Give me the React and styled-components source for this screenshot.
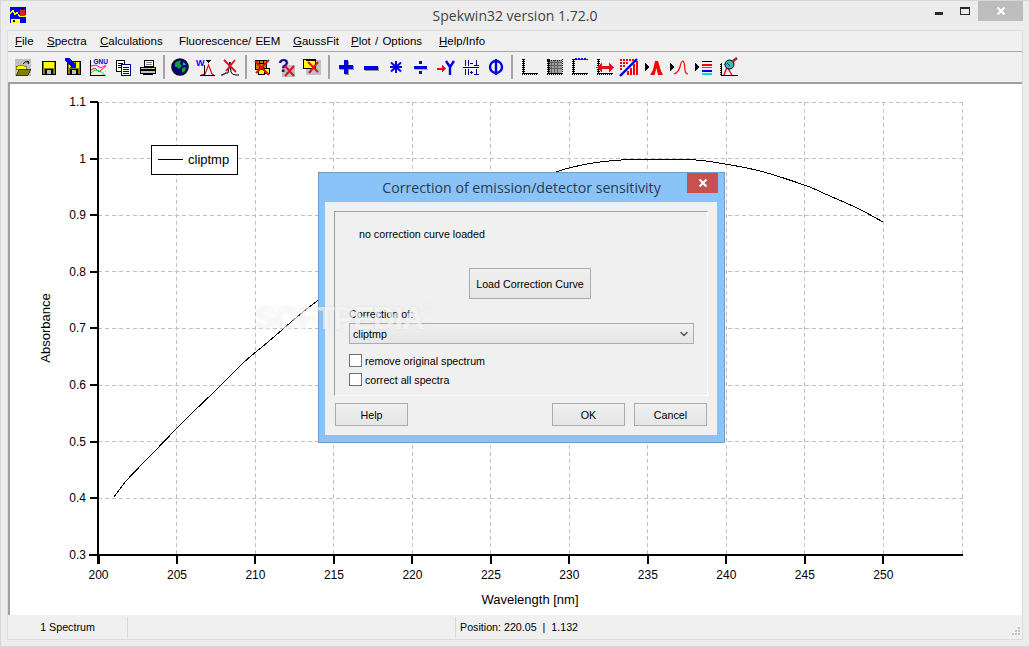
import React from 'react';
import styled, { createGlobalStyle } from 'styled-components';
import { ChevronDown } from 'lucide-react';

const Global = createGlobalStyle`
  html, body { margin: 0; padding: 0; overflow: hidden; background: #ececec; }
  * { box-sizing: border-box; }
`;

const Win = styled.div`
  position: relative; width: 1030px; height: 647px; background: #ececec;
  border: 1px solid #d6d6d6; display: flex; flex-direction: column;
  font-family: "Liberation Sans", Arial, sans-serif; font-size: 12px; color: #000;
`;
const TitleBar = styled.div`
  position: relative; height: 29px; flex: none; display: flex; align-items: center; justify-content: center;
`;
const AppIcon = styled.svg`position: absolute; left: 9px; top: 6px;`;
const TitleText = styled.div`
  font-family: "Open Sans", sans-serif; font-size: 14px; color: #444; margin-top: -1px;
`;
const WinButtons = styled.div`
  position: absolute; right: 6px; top: 0; height: 20px; display: flex; align-items: stretch;
`;
const WinBtn = styled.div`
  width: ${p => p.$w}px; height: 20px; display: flex; align-items: center; justify-content: center;
  background: ${p => p.$bg || 'transparent'};
`;
const Frame = styled.div`
  flex: 1; margin: 0 6px 6px 6px; border: 1px solid #dcdcdc; background: #f0f0f0;
  display: flex; flex-direction: column; min-height: 0;
`;
const MenuBar = styled.div`
  height: 21px; flex: none; border-bottom: 1px solid #a8a8a8; display: flex; align-items: center;
  padding-left: 7px; gap: 14px;
`;
const MenuItem = styled.span`
  width: ${p => p.$w}px; flex: none; white-space: nowrap; font-size: 11.5px; word-spacing: 1px; color: #000;
  u { text-decoration: underline; }
`;
const ToolBar = styled.div`
  height: 30px; flex: none; display: flex; align-items: center; padding-left: 2px;
`;
const ToolBtn = styled.div`
  width: 25px; height: 24px; flex: none; display: flex; align-items: center; justify-content: center;
`;
const ToolSep = styled.div`
  width: 2px; height: 24px; flex: none; background: #a4a4a4; margin: 0 ${p => p.$m}px 0 ${p => p.$l}px;
`;
const Plot = styled.div`
  flex: 1; min-height: 0; background: #fff; border-top: 2px solid #a0a0a0; border-left: 2px solid #a0a0a0;
  display: block;
`;
const Chart = styled.svg`display: block;`;
const AxisTitle = styled.text`font-size: 13px;`;
const Status = styled.div`
  position: relative; height: 24px; flex: none; display: flex; align-items: stretch; background: #f0f0f0;
  font-size: 10.7px; padding: 2px 0;
`;
const StatusCell = styled.div`
  width: ${p => p.$w}; flex: ${p => p.$w ? 'none' : '1'}; display: flex; align-items: center;
  justify-content: ${p => p.$center ? 'center' : 'flex-start'};
  padding-left: ${p => p.$pad || 0}px;
  border-right: ${p => p.$line ? '1px solid #d8d8d8' : 'none'};
`;
const Grip = styled.svg`position: absolute; right: 0; bottom: 0;`;

const Dialog = styled.div`
  position: absolute; left: 317px; top: 171px; width: 407px; height: 271px;
  background: #8ac3f8; border: 1px solid #6b9fd0; padding: 29px 7px 7px 6px;
  display: flex; flex-direction: column; font-size: 10.7px;
`;
const DialogTitle = styled.div`
  position: absolute; left: 0; right: 0; top: 5px; text-align: center;
  font-family: "Open Sans", sans-serif; font-size: 14.15px; line-height: 20px; color: #2b3b4d;
`;
const CloseBtn = styled.div`
  position: absolute; right: 6px; top: 0; width: 31px; height: 20px; background: #c75050;
  display: flex; align-items: center; justify-content: center;
`;
const Client = styled.div`
  flex: 1; background: #f0f0f0; padding: 9px 9px 0 9px; display: flex; flex-direction: column;
`;
const Group = styled.div`
  width: 374px; height: 185px; flex: none; border-top: 1px solid #a0a0a0; border-left: 1px solid #a0a0a0;
  border-right: 1px solid #fff; border-bottom: 1px solid #fff; display: flex; flex-direction: column;
`;
const Line = styled.div`
  line-height: 14px; height: 14px; margin: ${p => p.$t}px 0 0 ${p => p.$l}px; white-space: nowrap;
`;
const Btn = styled.button`
  font: inherit; font-size: 10.7px; color: #000; padding: 0; width: ${p => p.$w}px; height: ${p => p.$h}px; flex: none;
  border: 1px solid #acacac; background: linear-gradient(#f0f0f0, #e5e5e5);
`;
const LoadBtn = styled(Btn)`margin: 27px 0 0 134px;`;
const Select = styled.div`
  width: 345px; height: 21px; margin: 2px 0 0 14px; border: 1px solid #acacac; flex: none;
  background: linear-gradient(#f0f0f0, #e5e5e5); display: flex; align-items: center; justify-content: space-between;
  padding: 0 3px 0 3px;
`;
const CheckRow = styled.label`
  display: flex; align-items: center; height: 13px; margin: ${p => p.$t}px 0 0 14px; gap: 3px;
`;
const Check = styled.input`
  appearance: none; width: 13px; height: 13px; margin: 0; background: #fff; border: 1px solid #707070; flex: none;
`;
const Footer = styled.div`
  display: flex; margin: 7px 1px 0 1px; gap: 9px; width: 372px;
`;
const Spacer = styled.div`flex: 1;`;
const Watermark = styled.div`
  position: absolute; left: 254px; top: 300px; font-weight: bold; font-size: 31px; letter-spacing: -1px; line-height: 36px;
  color: rgba(255,255,255,.6); text-shadow: 0 0 3px rgba(150,150,150,.2); pointer-events: none;
  sup { font-size: 10px; font-weight: normal; vertical-align: top; line-height: 16px; }
`;

const S = ({ children }) => (
  <svg width="20" height="20" viewBox="0 0 20 20" shapeRendering="crispEdges">{children}</svg>
);
const Floppy = () => (<>
  <rect x="4.5" y="4.5" width="13" height="13" fill="#808000" stroke="#000" />
  <rect x="6" y="5" width="10" height="6" fill="#ffff00" />
  <rect x="7" y="12" width="8" height="6" fill="#000" />
  <rect x="9" y="13" width="4" height="4" fill="#c0c0c0" />
</>);
const Axes = () => (<>
  <rect x="4" y="2" width="1" height="15" fill="#000" />
  <rect x="4" y="16" width="15" height="1" fill="#000" />
  <line x1="3.5" y1="2" x2="3.5" y2="18" stroke="#000" strokeDasharray="1 1" />
  <line x1="3" y1="17.5" x2="19" y2="17.5" stroke="#000" strokeDasharray="1 1" />
  <line x1="5.5" y1="2" x2="5.5" y2="16" stroke="#000" strokeDasharray="1 1" />
</>);
const RedX = ({ x = 0, y = 0 }) => (
  <g transform={`translate(${x} ${y})`} shapeRendering="auto">
    <path d="M0 0 L9 10 M9 0 L0 10" stroke="#e01020" strokeWidth="2" fill="none" />
  </g>
);
const PlayTri = () => <polygon points="1,6 6,10 1,14" fill="#000" />;

const icons = [
  <S><rect x="2" y="2" width="16" height="17" fill="#c0c0c0" /><path d="M3 9h2l1-1h4l1 1h2v3H3z" fill="#ffff00" stroke="#404000" strokeWidth=".6" /><path d="M3 18.5 L6.5 12 H18 L14.5 18.5z" fill="#808000" stroke="#202000" strokeWidth=".7" /><path d="M10 7 Q12 3.5 16 5 M16 5 l-2-1 M16 5 l-1 2" stroke="#000" fill="none" shapeRendering="auto" /></S>,
  <S><Floppy /></S>,
  <S><Floppy /><path d="M2 1 h4 l5 5 l2 -2 v7 h-7 l2-2 l-6-5z" fill="#0000ff" /></S>,
  <S><text x="5.5" y="6.5" fontSize="6.5" fontWeight="bold" fill="#0000c0" fontFamily="Liberation Sans, sans-serif">GNU</text><rect x="2" y="3" width="1" height="16" fill="#000" /><rect x="2" y="18" width="16" height="1" fill="#000" /><g shapeRendering="auto" fill="none"><path d="M3 9 L8 8 L13 11 L18 8" stroke="#ff00ff" /><path d="M3 13 L7 11 L11 15 L18 9" stroke="#ff2020" /><path d="M3 16 L7 13 L12 14 L18 19" stroke="#10e010" /></g></S>,
  <S><rect x="3.5" y="3.5" width="8" height="11" fill="#fff" stroke="#000" /><path d="M5 6h5M5 8h5M5 10h3" stroke="#000" /><rect x="8.5" y="7.5" width="9" height="11" fill="#fff" stroke="#000080" /><path d="M10 10h6M10 12h6M10 14h6M10 16h6" stroke="#000080" /></S>,
  <S><path d="M6.5 3.5h9v6h-9z" fill="#fff" stroke="#000" /><path d="M8 5h6M8 7h6" stroke="#808080" /><path d="M2.5 10.5h15v6h-15z" fill="#c0c0c0" stroke="#000" /><rect x="3" y="12" width="14" height="2" fill="#000" /><rect x="14" y="11" width="2" height="1" fill="#ffff00" /><path d="M5 17.5h10" stroke="#000" /></S>,
  <S><g shapeRendering="auto"><circle cx="10" cy="10" r="8.2" fill="#000080" stroke="#101010" strokeWidth="1.2" /><path d="M5 6 Q8 3 11 4 L10 7 L12 9 L9 12 L7 10 L5 10z" fill="#10a040" /><path d="M12 11 L16 10 L15 14 L12 16z" fill="#10a040" /><path d="M13 5 Q15 6 16 8 L13 8z" fill="#00c0c0" /></g></S>,
  <S><text x="1" y="8.5" fontSize="9" fontWeight="bold" fill="#0000ff" fontFamily="Liberation Sans, sans-serif">W</text><polygon points="11,3 16,3 13.5,6" fill="#000" /><path d="M6 18 L10 17 L13.5 8 L17 17 L19 18" stroke="#e01020" fill="none" strokeWidth="1.2" shapeRendering="auto" /><rect x="5" y="18" width="15" height="1" fill="#000" /><rect x="9" y="8" width="1" height="10" fill="#000" /></S>,
  <S><path d="M1 18 h2 v-1 h2 v-1 h3 L10 5 L11 15 q1 3 5 3 h3" stroke="#000" fill="none" shapeRendering="auto" /><g shapeRendering="auto"><path d="M4 3 L16 15 M15 3 L6 14" stroke="#e01020" strokeWidth="1.8" /></g></S>,
  <S><rect x="3.5" y="3.5" width="11" height="9" fill="#c08000" stroke="#000" /><path d="M4 6h10M7 4v8M11 4v8" stroke="#000" /><rect x="10.5" y="11.5" width="7" height="5" fill="#ffff00" stroke="#000" /><rect x="6.5" y="12.5" width="6" height="5" fill="#ffff00" stroke="#000" /><g shapeRendering="auto"><path d="M3 4 L17 18 M17 3 L4 16" stroke="#e01020" strokeWidth="2" /></g></S>,
  <S><rect x="5" y="8" width="13" height="12" fill="#c0c0c0" /><text x="1" y="15" fontSize="18" fontWeight="bold" fill="#101090" fontFamily="Liberation Sans, sans-serif">?</text><RedX x="8" y="9" /></S>,
  <S><rect x="4" y="3" width="15" height="15" fill="#c0c0c0" /><rect x="1.5" y="2.5" width="12" height="9" fill="#ffff00" stroke="#000" /><path d="M4 3 h10" stroke="#000" /><g shapeRendering="auto"><path d="M6 5 L16 15 M16 5 L7 16" stroke="#e01020" strokeWidth="2" /></g></S>,
  <S><rect x="4" y="9" width="14" height="4" fill="#909090" /><rect x="9" y="4" width="4" height="14" fill="#909090" /><rect x="3" y="8" width="14" height="4" fill="#0000e0" /><rect x="8" y="3" width="4" height="14" fill="#0000e0" /></S>,
  <S><rect x="4" y="10" width="14" height="4" fill="#909090" /><rect x="3" y="9" width="14" height="4" fill="#0000e0" /></S>,
  <S><path d="M10 4 V16 M5 5.5 L15 14.5 M15 5.5 L5 14.5 M4 10 H16" stroke="#0000e0" strokeWidth="2" shapeRendering="auto" /></S>,
  <S><rect x="3" y="9" width="13" height="3" fill="#0000e0" /><rect x="8" y="4" width="3" height="3" fill="#0000e0" /><rect x="8" y="14" width="3" height="3" fill="#0000e0" /><rect x="4" y="12" width="13" height="1" fill="#b0b0b0" /></S>,
  <S><path d="M1 11.5 H7" stroke="#ff0000" strokeWidth="2" /><polygon points="6,8 10,11.5 6,15" fill="#ff0000" /><path d="M10 4 L14 10 L18 4 M14 10 V18" stroke="#0000e0" strokeWidth="2.4" fill="none" shapeRendering="auto" /></S>,
  <S><path d="M4.5 3v6M7.5 3v6M4.5 12v6M7.5 12v6" stroke="#00008b" /><path d="M9 6h3M9 15h3M10.5 13.5v3" stroke="#00008b" /><path d="M13 8h5M15.5 3v5M13 17h5M15.5 12v5" stroke="#00008b" /><rect x="2" y="10" width="16" height="1" fill="#000" /></S>,
  <S><g shapeRendering="auto"><ellipse cx="10" cy="10" rx="6" ry="6" fill="none" stroke="#0000e0" strokeWidth="2.4" /><path d="M10 2 V18" stroke="#0000e0" strokeWidth="2.4" /></g></S>,
  <S><Axes /></S>,
  <S><rect x="5" y="3" width="13" height="13" fill="#a0a0a0" /><path d="M7.5 3v13M10.5 3v13M13.5 3v13M5 5.5h13M5 8.5h13M5 11.5h13" stroke="#606060" /><Axes /><line x1="3" y1="3" x2="19" y2="3" stroke="#000" strokeDasharray="1 1" /><line x1="18.5" y1="2" x2="18.5" y2="18" stroke="#000" strokeDasharray="1 1" /></S>,
  <S><Axes /><line x1="5" y1="2.5" x2="19" y2="2.5" stroke="#000" /><line x1="6" y1="2" x2="18" y2="2" stroke="#0000ff" strokeWidth="2" strokeDasharray="2 1" /><line x1="8" y1="2" x2="18" y2="2" stroke="#ff0000" strokeWidth="1" strokeDasharray="1 2" /></S>,
  <S><Axes /><path d="M6 10.5 H18" stroke="#e01020" strokeWidth="3" /><polygon points="8,6 2.5,10.5 8,15" fill="#e01020" /><polygon points="15,6 20,10.5 15,15" fill="#e01020" /></S>,
  <S><g fill="#ff0000"><rect x="1" y="2" width="2" height="2" /><rect x="4" y="2" width="2" height="2" /><rect x="7" y="2" width="2" height="2" /><rect x="10" y="2" width="2" height="2" /><rect x="13" y="2" width="2" height="2" /><rect x="1" y="5" width="2" height="2" /><rect x="4" y="5" width="2" height="2" /><rect x="7" y="5" width="2" height="2" /><rect x="1" y="8" width="2" height="2" /><rect x="4" y="8" width="2" height="2" /><rect x="1" y="11" width="2" height="2" /><rect x="8" y="14" width="2" height="4" /><rect x="11" y="11" width="2" height="7" /><rect x="14" y="7" width="2" height="11" /><rect x="17" y="4" width="2" height="14" /></g><path d="M1 19 L18 2" stroke="#0000e0" strokeWidth="2.4" shapeRendering="auto" /></S>,
  <S><PlayTri /><path d="M6 18 L9 13 L11 4 H14 L17 14 L19 18 H14 L12.5 11 L10.5 18z" fill="#ff0000" shapeRendering="auto" /></S>,
  <S><PlayTri /><path d="M5 17 Q9 16 11 10 Q12 4 14 4 Q15.5 5 16 13 Q16.5 17 19 17" fill="none" stroke="#ff0000" strokeWidth="1.2" shapeRendering="auto" /></S>,
  <S><PlayTri /><rect x="8" y="4" width="10" height="1" fill="#000" /><rect x="8" y="7" width="10" height="2" fill="#ff0000" /><rect x="8" y="10" width="10" height="1" fill="#00b000" /><rect x="8" y="13" width="10" height="2" fill="#0000ff" /><rect x="8" y="16" width="10" height="2" fill="#00e0e0" /></S>,
  <S><rect x="2" y="6" width="1" height="13" fill="#000" /><rect x="2" y="18" width="17" height="1" fill="#000" /><line x1="1" y1="7" x2="1" y2="19" stroke="#000" strokeDasharray="1 1" /><path d="M5 7.5h10" stroke="#808080" strokeDasharray="1 1" /><g shapeRendering="auto"><path d="M5 18 L8 10 L13 18" stroke="#e01020" fill="none" strokeWidth="1.4" /><circle cx="10.5" cy="7.5" r="4.5" fill="#30c0b0" stroke="#000" /><path d="M8 6 L11 9" stroke="#0000c0" /><path d="M13 5 L18 1" stroke="#a02030" strokeWidth="2.4" /></g></S>,
];

const sepAfter = { 5: [2.5, 2.5], 8: [2.5, 2.5], 11: [3.5, 3.5], 18: [3, 3] };

const xs = Array.from({ length: 11 }, (_, i) => 98.5 + i * 78.48);
const ys = Array.from({ length: 9 }, (_, i) => 102 + i * 56.6);
const yLabels = ['1.1', '1', '0.9', '0.8', '0.7', '0.6', '0.5', '0.4', '0.3'];
const pts = [[114,497],[127,480],[153,453],[185,420],[217,389],[243,363],[268,342],[297,317],[317,301],[360,270],[420,235],[480,205],[530,182],[556,172],[573,167],[600,162],[630,159.5],[687,159.5],[713,162],[760,171],[807,186],[823,193],[857,208],[883,222]];
const curve = pts.map((p, i) => {
  if (i === 0) return `M${p[0]} ${p[1]}`;
  const p0 = pts[i - 2] || pts[i - 1];
  const p1 = pts[i - 1];
  const p3 = pts[i + 1] || p;
  const c1 = [p1[0] + (p[0] - p0[0]) / 6, p1[1] + (p[1] - p0[1]) / 6];
  const c2 = [p[0] - (p3[0] - p1[0]) / 6, p[1] - (p3[1] - p1[1]) / 6];
  return `C${c1[0]} ${c1[1]} ${c2[0]} ${c2[1]} ${p[0]} ${p[1]}`;
}).join(' ');

const menus = [['F', 'ile', 18], ['S', 'pectra', 39], ['C', 'alculations', 65], ['', 'Fluorescence/ EEM', 100], ['G', 'aussFit', 44], ['P', 'lot / Options', 74], ['H', 'elp/Info', 51]];

export default function App() {
  return (
    <Win>
      <Global />
      <TitleBar>
        <AppIcon width="16" height="16" viewBox="0 0 16 16" shapeRendering="crispEdges">
          <rect width="16" height="16" fill="#0000e0" />
          <path d="M0 7 L3 3 L5 8 L7 5 L9 9 L16 9" stroke="#ffff00" strokeWidth="1.2" fill="none" />
          <rect x="10" y="3" width="5" height="6" fill="#e02020" />
          <rect x="11" y="1" width="3" height="2" fill="#301010" />
          <rect x="1" y="12" width="9" height="4" fill="#ffff40" />
          <rect x="3" y="13" width="2" height="2" fill="#000" />
        </AppIcon>
        <TitleText>Spekwin32 version 1.72.0</TitleText>
        <WinButtons>
          <WinBtn $w={27}>
            <svg width="10" height="10" viewBox="0 0 10 10"><rect x="1" y="6" width="8" height="3" fill="#2a2a2a" /></svg>
          </WinBtn>
          <WinBtn $w={26}>
            <svg width="12" height="12" viewBox="0 0 12 12" shapeRendering="crispEdges"><rect x="1.5" y="2.5" width="9" height="7" fill="none" stroke="#2a2a2a" /><rect x="1" y="2" width="10" height="2" fill="#2a2a2a" /></svg>
          </WinBtn>
          <WinBtn $w={45} $bg="#bdbdbd">
            <svg width="10" height="10" viewBox="0 0 10 10"><path d="M1.5 1.5 L8.5 8.5 M8.5 1.5 L1.5 8.5" stroke="#fff" strokeWidth="2" /></svg>
          </WinBtn>
        </WinButtons>
      </TitleBar>
      <Frame>
        <MenuBar>
          {menus.map(([u, r, w]) => <MenuItem key={r} $w={w}>{u && <u>{u}</u>}{r}</MenuItem>)}
        </MenuBar>
        <ToolBar>
          {icons.map((ic, i) => (
            <React.Fragment key={i}>
              <ToolBtn>{ic}</ToolBtn>
              {sepAfter[i] && <ToolSep $l={sepAfter[i][0]} $m={sepAfter[i][1]} />}
            </React.Fragment>
          ))}
        </ToolBar>
        <Plot>
          <Chart width="1012" height="531" viewBox="10 84 1012 531" fontFamily="'Liberation Sans', Arial, sans-serif" fontSize="12">
            <g stroke="#c0c0c0" strokeDasharray="4 3" shapeRendering="crispEdges">
              {xs.slice(1).map(x => <line key={x} x1={x} y1="102" x2={x} y2="555" />)}
              <line x1="962.5" y1="102" x2="962.5" y2="555" />
              {ys.slice(0, -1).map(y => <line key={y} x1="98" y1={y} x2="963" y2={y} />)}
            </g>
            <path d={curve} fill="none" stroke="#000" strokeWidth="1" shapeRendering="crispEdges" />
            <g stroke="#000" strokeWidth="2" shapeRendering="crispEdges">
              <line x1="98" y1="102" x2="98" y2="564" />
              <line x1="89" y1="555" x2="963" y2="555" />
              {xs.map(x => <line key={x} x1={x} y1="555" x2={x} y2="564" />)}
              {ys.map(y => <line key={y} x1="90" y1={y} x2="98" y2={y} />)}
            </g>
            {ys.map((y, i) => <text key={y} x="86" y={y + 4} textAnchor="end">{yLabels[i]}</text>)}
            {xs.map((x, i) => <text key={x} x={x} y="579" textAnchor="middle">{200 + i * 5}</text>)}
            <AxisTitle x="530" y="604" textAnchor="middle">Wavelength [nm]</AxisTitle>
            <AxisTitle transform="translate(50 328) rotate(-90)" textAnchor="middle">Absorbance</AxisTitle>
            <rect x="151.5" y="145.5" width="86" height="29" fill="#fff" stroke="#000" shapeRendering="crispEdges" />
            <line x1="158" y1="159.5" x2="183" y2="159.5" stroke="#000" shapeRendering="crispEdges" />
            <AxisTitle x="188" y="164">cliptmp</AxisTitle>
          </Chart>
        </Plot>
        <Status>
          <StatusCell $w="120px" $center $line>1 Spectrum</StatusCell>
          <StatusCell $w="328px" $line />
          <StatusCell $pad={4}>Position: 220.05&nbsp; |&nbsp; 1.132</StatusCell>
          <Grip width="12" height="12" viewBox="0 0 12 12" shapeRendering="crispEdges">
            <g fill="#c4c4c4">
              <rect x="8" y="0" width="2" height="2" /><rect x="5" y="3" width="2" height="2" /><rect x="8" y="3" width="2" height="2" />
              <rect x="2" y="6" width="2" height="2" /><rect x="5" y="6" width="2" height="2" /><rect x="8" y="6" width="2" height="2" />
            </g>
          </Grip>
        </Status>
      </Frame>
      <Dialog>
        <DialogTitle>Correction of emission/detector sensitivity</DialogTitle>
        <CloseBtn>
          <svg width="10" height="10" viewBox="0 0 10 10"><path d="M1.5 1.5 L8.5 8.5 M8.5 1.5 L1.5 8.5" stroke="#fff" strokeWidth="2" /></svg>
        </CloseBtn>
        <Client>
          <Group>
            <Line $t={15} $l={24}>no correction curve loaded</Line>
            <LoadBtn $w={122} $h={31}>Load Correction Curve</LoadBtn>
            <Line $t={8} $l={14}>Correction of:</Line>
            <Select>
              <span>cliptmp</span>
              <ChevronDown size={12} strokeWidth={3} color="#555" />
            </Select>
            <CheckRow $t={10}><Check type="checkbox" />remove original spectrum</CheckRow>
            <CheckRow $t={6}><Check type="checkbox" />correct all spectra</CheckRow>
          </Group>
          <Footer>
            <Btn $w={73} $h={23}>Help</Btn>
            <Spacer />
            <Btn $w={73} $h={23}>OK</Btn>
            <Btn $w={73} $h={23}>Cancel</Btn>
          </Footer>
        </Client>
      </Dialog>
      <Watermark>SOFTPEDIA<sup>®</sup></Watermark>
    </Win>
  );
}
